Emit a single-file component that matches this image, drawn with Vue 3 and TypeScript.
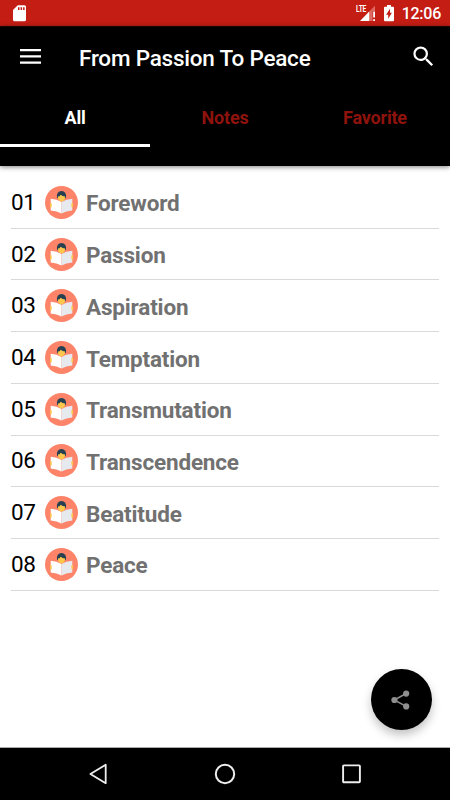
<script setup lang="ts">
import { ref } from 'vue'

interface Chapter {
  number: string
  title: string
}

const tabs: string[] = ['All', 'Notes', 'Favorite']
const activeTab = ref<string>('All')

const chapters: Chapter[] = [
  'Foreword',
  'Passion',
  'Aspiration',
  'Temptation',
  'Transmutation',
  'Transcendence',
  'Beatitude',
  'Peace',
].map((title, i) => ({ number: String(i + 1).padStart(2, '0'), title }))
</script>

<template>
  <div class="screen">
    <div class="status-bar">
      <svg class="sd-icon" width="13" height="17" viewBox="0 0 13 17">
        <path d="M4.8 .3H11.5Q13 .3 13 1.8V14.7Q13 16.2 11.5 16.2H1.5Q0 16.2 0 14.7V5.1Z" fill="#fff" />
        <path d="M5 2.2h1.5v2.9H5zM7.6 2.2h1.5v2.9H7.6zM10.1 2.2h1.5v2.9h-1.5z" fill="#c41d14" />
      </svg>
      <div class="status-right">
        <div class="signal">
          <span class="lte">LTE</span>
          <svg class="signal-icon" width="16" height="17" viewBox="0 0 16 17">
            <path d="M15 .8V6H12.6V16H9V6.8Z" fill="#dc6a62" />
            <path d="M9.2 6.6V16H0Z" fill="#fff" />
            <path d="M13.2 6.6H15V12.6H13.2zM13.2 14.2H15V16H13.2z" fill="#fff" />
          </svg>
        </div>
        <svg class="battery-icon" width="10" height="17" viewBox="0 0 10 17">
          <path d="M3 0H7V1.7H9Q10 1.7 10 2.7V15.2Q10 16.2 9 16.2H1Q0 16.2 0 15.2V2.7Q0 1.7 1 1.7H3Z" fill="#fff" />
          <path d="M6 3.8V7.8H7.9L4.2 13.8V9.8H2.1Z" fill="#c41d14" />
        </svg>
        <span class="clock">12:06</span>
      </div>
    </div>

    <header class="header">
      <div class="toolbar">
        <svg class="menu-icon" width="21" height="15" viewBox="0 0 21 15">
          <path d="M0 0h21v2.3H0zM0 6.2h21v2.3H0zM0 12.5h21v2.3H0z" fill="#fff" />
        </svg>
        <h1 class="title">From Passion To Peace</h1>
        <svg class="search-icon" width="27" height="27" viewBox="0 0 24 24">
          <path
            fill="#fff"
            d="M15.5 14h-.79l-.28-.27A6.471 6.471 0 0 0 16 9.5 6.5 6.5 0 1 0 9.5 16c1.61 0 3.09-.59 4.23-1.57l.27.28v.79l5 4.99L20.49 19l-4.99-5zm-6 0C7.01 14 5 11.99 5 9.5S7.01 5 9.5 5 14 7.01 14 9.5 11.99 14 9.5 14z"
          />
        </svg>
      </div>
      <nav class="tabs">
        <button
          v-for="tab in tabs"
          :key="tab"
          class="tab"
          :class="{ active: tab === activeTab }"
          @click="activeTab = tab"
        >
          {{ tab }}
        </button>
      </nav>
    </header>

    <main class="content">
      <ul class="list">
        <li v-for="chapter in chapters" :key="chapter.number" class="row">
          <span class="number">{{ chapter.number }}</span>
          <svg class="reader-icon" width="33" height="33" viewBox="0 0 33 33">
            <circle cx="16.5" cy="16.5" r="16.5" fill="#fd8469" />
            <path d="M12 11.5Q11.4 5 16.5 5T21 11.5L19.8 12.6H13.2Z" fill="#264052" />
            <path d="M12.9 10.6Q14.8 10.5 15.7 8.7Q17.4 10.4 20.1 10.6Q20 15.4 16.5 15.4T12.9 10.6Z" fill="#fdc64c" />
            <path d="M5.7 12.7Q12 12.9 16.5 15.9V27.4Q12 25.1 5.7 24.6Z" fill="#fff" />
            <path d="M27.3 12.7Q21 12.9 16.5 15.9V27.4Q21 25.1 27.3 24.6Z" fill="#e6e9ee" />
            <rect x="5" y="17" width="1.7" height="4.6" rx=".8" fill="#fdc64c" />
            <rect x="26.4" y="17" width="1.7" height="4.6" rx=".8" fill="#fdc64c" />
          </svg>
          <span class="name">{{ chapter.title }}</span>
        </li>
      </ul>
      <button class="fab" aria-label="Share">
        <svg width="20" height="20" viewBox="0 0 20 20">
          <path d="M15.2 3.5L3.2 10L15.2 16.4" fill="none" stroke="#8e8e8e" stroke-width="1.5" />
          <circle cx="15.2" cy="3.6" r="3.1" fill="#8e8e8e" />
          <circle cx="3.4" cy="10" r="3.1" fill="#8e8e8e" />
          <circle cx="15.2" cy="16.4" r="3.1" fill="#8e8e8e" />
        </svg>
      </button>
    </main>

    <footer class="nav-bar">
      <svg width="20" height="22" viewBox="0 0 20 22">
        <path d="M17.7 1.8V20.2L2.4 11Z" fill="none" stroke="#eee" stroke-width="1.8" stroke-linejoin="round" />
      </svg>
      <svg width="22" height="22" viewBox="0 0 22 22">
        <circle cx="11" cy="11" r="9.2" fill="none" stroke="#eee" stroke-width="2" />
      </svg>
      <svg width="20" height="20" viewBox="0 0 20 20">
        <rect x="2.1" y="1.4" width="16.8" height="16.8" rx=".8" fill="none" stroke="#eee" stroke-width="1.9" />
      </svg>
    </footer>
  </div>
</template>

<style>
body {
  margin: 0;
}
</style>

<style scoped>
.screen {
  display: flex;
  flex-direction: column;
  width: 450px;
  height: 800px;
  overflow: hidden;
  background: #fff;
  font-family: Roboto, sans-serif;
}

button {
  border: 0;
  padding: 0;
  font-family: inherit;
}

.status-bar {
  display: flex;
  flex: none;
  align-items: flex-start;
  justify-content: space-between;
  box-sizing: border-box;
  height: 26px;
  padding: 5px 9px 0 13px;
  background: #c41d14;
}

.status-right {
  display: flex;
  align-items: flex-start;
}

.signal {
  display: flex;
  align-items: flex-start;
  width: 28px;
}

.lte {
  flex: none;
  width: 4px;
  font-size: 9.5px;
  font-weight: 700;
  line-height: 8px;
  white-space: nowrap;
  letter-spacing: -0.3px;
  color: #fff;
  transform: scaleX(0.7);
  transform-origin: left;
}

.signal-icon {
  flex: none;
}

.battery-icon {
  margin-right: 8px;
}

.clock {
  font-size: 16px;
  font-weight: 500;
  line-height: 18px;
  letter-spacing: -0.25px;
  color: #fff;
}

.header {
  flex: none;
  box-sizing: border-box;
  height: 140px;
  border-top: 1px solid #1c0201;
  background: #000;
  box-shadow: 0 1px 5px rgba(0, 0, 0, 0.5);
  z-index: 1;
}

.toolbar {
  display: flex;
  align-items: center;
  height: 62px;
  padding: 0 13px 0 20px;
}

.menu-icon {
  margin-top: -3px;
}

.title {
  flex: 1;
  margin: 0 0 0 38px;
  font-size: 22.5px;
  font-weight: 500;
  line-height: 30px;
  letter-spacing: -0.22px;
  color: #fff;
}

.search-icon {
  margin-top: -3px;
}

.tabs {
  display: grid;
  grid-template-columns: repeat(3, 1fr);
  height: 57.5px;
}

.tab {
  padding-top: 2px;
  border-bottom: 3px solid transparent;
  background: none;
  font-size: 18px;
  font-weight: 700;
  letter-spacing: -0.2px;
  color: #8f130d;
}

.tab.active {
  border-bottom-color: #fff;
  color: #fff;
}

.content {
  flex: 1;
  position: relative;
}

.list {
  margin: 0;
  padding: 11px 11px 0;
  list-style: none;
}

.row {
  display: flex;
  align-items: center;
  box-sizing: border-box;
  height: 51.72px;
  border-bottom: 1px solid #d9d9d9;
  color: #000;
  font-size: 22.5px;
}

.number {
  width: 33.6px;
  padding-bottom: 1px;
  letter-spacing: -0.4px;
}

.reader-icon {
  flex: none;
  margin-right: 8.4px;
}

.name {
  padding-top: 2px;
  font-weight: 700;
  letter-spacing: -0.17px;
  color: #717171;
}

.fab {
  position: absolute;
  right: 18px;
  bottom: 17px;
  display: flex;
  align-items: center;
  justify-content: center;
  width: 61px;
  height: 61px;
  padding-right: 2px;
  border-radius: 50%;
  background: #000;
  box-shadow: 0 5px 10px rgba(0, 0, 0, 0.24);
}

.nav-bar {
  display: flex;
  flex: none;
  align-items: center;
  justify-content: space-between;
  box-sizing: border-box;
  height: 53px;
  padding: 0 89px 0 88px;
  border-top: 1px solid #aaa;
  background: #000;
}
</style>
